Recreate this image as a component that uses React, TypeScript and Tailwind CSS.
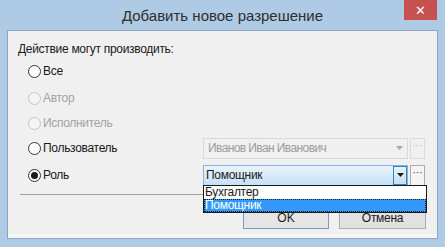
import React from "react";

const font = { fontFamily: '"Liberation Sans", Arial, sans-serif' };

function Radio({ label, disabled, checked }: { label: string; disabled?: boolean; checked?: boolean }) {
  return (
    <div className="flex items-center h-[24px]">
      <div
        className={
          "ml-[20px] w-[13px] h-[13px] rounded-full border flex items-center justify-center " +
          (disabled ? "border-[#c4c4c4] bg-[#f4f4f4]" : "border-[#333333] bg-white")
        }
      >
        {checked && <div className="w-[7px] h-[7px] rounded-full bg-[#1a1a1a]" />}
      </div>
      <span
        className={
          "ml-[2px] text-[12px] tracking-[-0.3px] " + (disabled ? "text-[#a3a3a3]" : "text-[#1a1a1a]")
        }
      >
        {label}
      </span>
    </div>
  );
}

function Arrow({ color }: { color: string }) {
  return (
    <svg width="7" height="4" viewBox="0 0 7 4">
      <path d="M0 0 H7 L3.5 4 Z" fill={color} />
    </svg>
  );
}

export default function App() {
  return (
    <div className="w-[445px] h-[247px] bg-[#aecae4] flex flex-col overflow-hidden" style={font}>
      {/* title bar */}
      <div className="h-[30px] flex shrink-0">
        <div className="w-[37px]" />
        <div className="flex-1 flex items-center justify-center pt-[2px] text-[15px] text-[#2e2e2e]">
          Добавить новое разрешение
        </div>
        <div className="w-[37px] pr-[8px]">
          <div className="w-[33px] h-[20px] -ml-[4px] bg-[#c75050] flex items-center justify-center text-white text-[13px] leading-none">
            ✕
          </div>
        </div>
      </div>
      {/* content */}
      <div className="mx-[7px] mb-[8px] flex-1 border border-[#8aa6c2] bg-[#f0f0f0] flex flex-col relative">
        <div className="pl-[10px] pt-[10px] text-[12px] leading-[16px] tracking-[-0.3px] text-[#1a1a1a]">
          Действие могут производить:
        </div>
        <div className="mt-[2px]">
          <Radio label="Все" />
        </div>
        <div className="mt-[3px]">
          <Radio label="Автор" disabled />
        </div>
        <div className="mt-[1px]">
          <Radio label="Исполнитель" disabled />
        </div>
        {/* Пользователь row */}
        <div className="mt-[1px] flex items-center">
          <div className="w-[195px]">
            <Radio label="Пользователь" />
          </div>
          <div className="flex items-center">
            <div className="w-[205px] h-[21px] border border-[#d9d9d9] bg-[#f0f0f0] flex items-center">
              <span className="flex-1 pl-[4px] text-[12px] tracking-[-0.6px] text-[#9c9c9c]">Иванов Иван Иванович</span>
              <div className="w-[14px] h-[19px] flex items-center justify-center mr-[1px]">
                <Arrow color="#a8a8a8" />
              </div>
            </div>
            <div className="ml-[2px] w-[15px] h-[21px] border border-[#dadada] bg-[#f0f0f0] flex items-start justify-center text-[10px] leading-[14px] text-[#b0b0b0]">
              ···
            </div>
          </div>
        </div>
        {/* Роль row */}
        <div className="mt-[3px] flex items-center relative">
          <div className="w-[195px]">
            <Radio label="Роль" checked />
          </div>
          <div className="flex items-center">
            <div className="w-[205px] h-[21px] border border-[#7eb4ea] bg-gradient-to-b from-[#ecf4fc] to-[#c4e0fa] flex items-center">
              <span className="flex-1 pl-[2px] text-[12px] tracking-[-0.3px] text-[#1a1a1a]">Помощник</span>
              <div className="w-[14px] h-[19px] border border-[#3c7fb1] bg-gradient-to-b from-[#e5f3fb] to-[#c4e0f6] flex items-center justify-center">
                <Arrow color="#1a1a1a" />
              </div>
            </div>
            <div className="ml-[2px] w-[15px] h-[21px] border border-[#acacac] bg-[#f4f4f4] flex items-start justify-center text-[10px] leading-[14px] text-[#333333]">
              ···
            </div>
          </div>
          {/* dropdown list */}
          <div className="absolute left-[195px] top-[22px] w-[224px] border border-[#1a1a1a] bg-white z-10 text-[12px] leading-[13px] tracking-[-0.3px]">
            <div className="h-[13px] pl-[1px] text-[#1a1a1a]">Бухгалтер</div>
            <div className="h-[13px] pl-[1px] bg-[#3399ff] text-white outline-1 outline-dotted outline-[#1a1a1a] -outline-offset-1">
              Помощник
            </div>
          </div>
        </div>
        {/* separator */}
        <div className="mt-[7px] ml-[12px] mr-[14px] h-px bg-[#a0a0a0]" />
        {/* buttons */}
        <div className="mt-[11px] flex justify-end pr-[11px] gap-[10px]">
          <div className="w-[86px] h-[23px] border border-[#7a9bbd] bg-[#e5e5e5] flex items-center justify-center text-[12px] text-[#1a1a1a]">
            OK
          </div>
          <div className="w-[87px] h-[23px] border border-[#acacac] bg-[#e1e1e1] flex items-center justify-center text-[12px] tracking-[-0.3px] text-[#1a1a1a]">
            Отмена
          </div>
        </div>
        <div className="flex-1" />
        <div className="h-[4px] border-t border-[#fafafa] border-b bg-[#f4f4f4]" />
      </div>
    </div>
  );
}
